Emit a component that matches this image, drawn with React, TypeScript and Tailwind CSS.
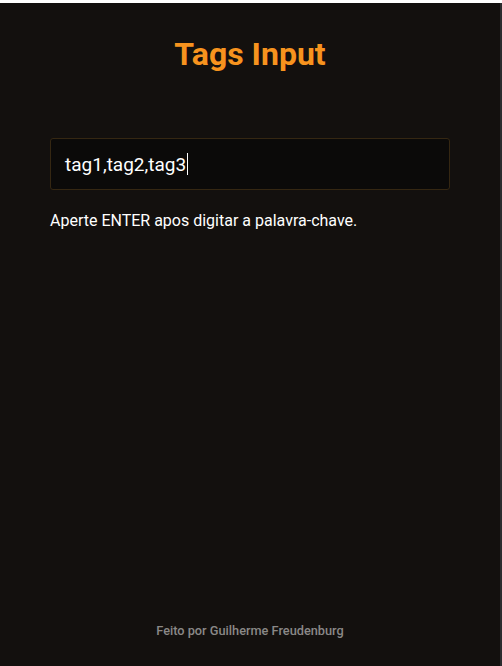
export default function App() {
  return (
    <div className="w-[502px] h-[666px] bg-white flex flex-col" style={{ fontFamily: "Roboto, 'Liberation Sans', sans-serif" }}>
      <div className="h-[3px] w-[500px] bg-white" />
      <div className="flex flex-1">
        <main className="w-[500px] bg-[#13100e] flex flex-col items-center">
          <h1 className="mt-[31px] text-[32px] font-bold text-[#f7931e] leading-[40px]">Tags Input</h1>
          <div className="mt-[64px] w-[400px]">
            <div className="h-[52px] border border-[#352712] rounded-[3px] bg-[#0b0a09] flex items-center pl-[14px]">
              <span className="text-[19px] text-white leading-none">tag1,tag2,tag3</span>
              <span className="w-px h-[22px] bg-white ml-[1px]" />
            </div>
            <p className="mt-[19px] text-[16px] leading-[24px] text-white">Aperte ENTER apos digitar a palavra-chave.</p>
          </div>
          <footer className="mt-auto mb-[26px] text-[12.75px] font-medium text-[#8a8887]">Feito por Guilherme Freudenburg</footer>
        </main>
        <div className="w-[2px] bg-[#2b2b2e]" />
      </div>
    </div>
  )
}
